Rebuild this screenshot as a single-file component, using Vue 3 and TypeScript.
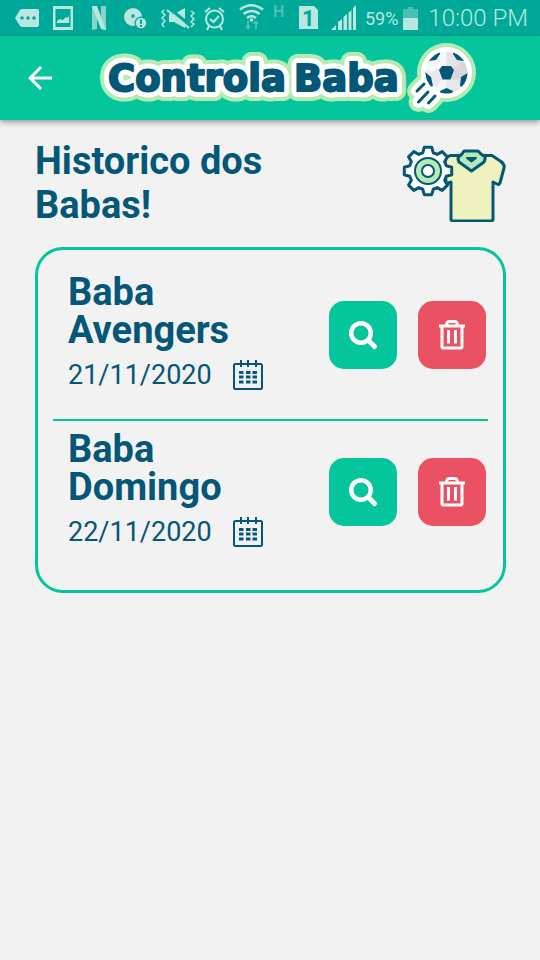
<script setup lang="ts">
import { ref } from 'vue'

interface Match {
  id: number
  name: string
  date: string
}

const matches = ref<Match[]>([
  { id: 1, name: 'Baba Avengers', date: '21/11/2020' },
  { id: 2, name: 'Baba Domingo', date: '22/11/2020' },
])

function removeMatch(id: number): void {
  matches.value = matches.value.filter((match) => match.id !== id)
}

// Outline of an eight-tooth cog wheel around (cx, cy).
function cog(cx: number, cy: number, inner: number, outer: number): string {
  const points: string[] = []
  const corners: [number, number][] = [
    [-16, inner],
    [-9, outer],
    [9, outer],
    [16, inner],
  ]
  for (let tooth = 0; tooth < 8; tooth++) {
    for (const [offset, radius] of corners) {
      const angle = ((tooth * 45 + offset) * Math.PI) / 180
      points.push(`${(cx + radius * Math.sin(angle)).toFixed(2)},${(cy - radius * Math.cos(angle)).toFixed(2)}`)
    }
  }
  return points.join(' ')
}

const cogPoints = cog(26, 27, 19, 24)

// The logo is painted in three passes: outer outline, inner outline, ink.
const logoLayers = ['halo-green', 'halo-white', 'ink']
</script>

<template>
  <div class="screen">
    <div class="status">
      <div class="status-icons" aria-hidden="true">
        <svg width="36" height="36" viewBox="10 0 36 36">
          <path class="on" d="M15 18 20 10Q21 9 22 9H37Q39 9 39 11V25Q39 27 37 27H22Q21 27 20 26Z" />
          <circle class="off" cx="22" cy="18" r="1.8" /><circle class="off" cx="28" cy="18" r="1.8" /><circle class="off" cx="34" cy="18" r="1.8" />
        </svg>
        <svg width="36" height="36" viewBox="46 0 36 36">
          <path class="on" fill-rule="evenodd" d="M53 6H73V30H53ZM55.5 9V27H70.5V9Z" />
          <path class="on" d="M57 23V21L60 19 63 20 66 17 67 18 69 16V23Z" />
        </svg>
        <svg width="34" height="36" viewBox="82 0 34 36">
          <path class="pale" d="M92 6H97V29L92 30ZM101 6H106V30L101 29Z" />
          <path class="on" d="M92 6H97L106 30 101 29Z" />
        </svg>
        <svg width="38" height="36" viewBox="116 0 38 36">
          <circle class="on" cx="133" cy="17" r="9" />
          <circle class="off" cx="133" cy="16" r="1.8" />
          <circle class="off" cx="141" cy="23" r="6.5" />
          <circle class="on" cx="141" cy="23" r="5.2" />
          <path class="off" d="M140 19.5H142V24H140ZM140 25H142V27H140Z" />
        </svg>
        <svg width="46" height="36" viewBox="154 0 46 36">
          <path class="on" d="M169 14H174L185 8V28L174 22H169Z" />
          <path class="cut" d="M169 8 191 26" />
          <path class="line" d="M167 10 189 28" />
          <path class="line thin" d="M164 10 162 12 165 15 162 18 165 21 162 24 164 27M191 11 194 13 191 16 194 19 191 22 194 24 191 27" />
        </svg>
        <svg width="32" height="36" viewBox="200 0 32 36">
          <circle class="line" cx="214.500" cy="19" r="8.500" />
          <path class="line" d="M205 12 210 8M219 8 224 12M209 26 207 30M220 26 222 30M210 19 213.500 22 219 16" />
        </svg>
        <svg width="38" height="36" viewBox="232 0 38 36">
          <path class="line wave" d="M240 9.500Q251.500 1 263 9.500M243.500 14Q251.500 8 259.500 14M247 18Q251.500 14.500 256 18" />
          <circle class="on" cx="251.500" cy="20" r="1.8" />
          <path class="dim" d="M247 21H249V26H251L248 30 245 26H247ZM255 29H257V24H259L256 20 252.500 24H255Z" />
        </svg>
        <svg width="22" height="36" viewBox="270 0 22 36">
          <text class="network" x="273" y="17">H</text>
        </svg>
        <svg width="33" height="36" viewBox="292 0 33 36">
          <path class="on" d="M299 6H314L318 10V29H299Z" />
          <text class="sim" x="302" y="26">1</text>
        </svg>
        <svg width="36" height="36" viewBox="325 0 36 36">
          <path class="on" d="M331 30 336 25V30ZM338 22 342 19V30H338ZM343.500 17 347 14V30H343.500ZM348.500 13 351.500 10V30H348.500ZM353 8 356 5V30H353Z" />
        </svg>
      </div>
      <span class="battery-level">59%</span>
      <svg class="battery" width="15" height="24" viewBox="0 0 15 24" aria-hidden="true">
        <path class="dim" d="M0 3H5V1H10V3H15V12H0Z" />
        <path class="on" d="M0 12H15V24H0Z" />
      </svg>
      <time class="clock">10:00 PM</time>
    </div>

    <header class="app-bar">
      <button class="back" type="button" aria-label="Voltar">
        <svg width="36" height="36" viewBox="0 0 24 24">
          <path fill="#fff" d="M20 11H7.83l5.59-5.59L12 4l-8 8 8 8 1.41-1.41L7.83 13H20v-2z" />
        </svg>
      </button>
      <svg class="logo" width="380" height="74" viewBox="98 41 380 74" role="img" aria-label="Controla Baba">
        <g v-for="layer in logoLayers" :key="layer" :class="layer">
          <text class="brand" x="108" y="91">Controla</text>
          <text class="brand" x="294" y="91">Baba</text>
          <circle v-if="layer !== 'ink'" cx="446.500" cy="72.500" r="19.500" />
          <path class="trail" d="M417 91 424 84M418.500 102 428 92M428.500 103 435 96" />
        </g>
        <clipPath id="ball"><circle cx="446.500" cy="72.500" r="21" /></clipPath>
        <g clip-path="url(#ball)">
          <path fill="#f4f8fa" d="M425 51H447V94H425Z" />
          <path fill="#e4e4e8" d="M446.500 51H468V94H446.500Z" />
          <path fill="#e9e9ed" d="M425 70 432 72 439 68 442 79 437 87 432 82 425 77ZM447 80 451 79 461 87 452 90 446 90Z" />
          <path fill="#d8d7dc" d="M454 68 462 61 468 68 468 74 461 79 451 79Z" />
          <path class="patch" d="M442 66H451L454 70 450.500 79.500H442.500L439 70ZM440 51V54L436 60 429 61V55L436 50ZM453 51V54L457 60 464 61V55L457 50ZM425 72 431 77 433 86 428 88 423 78ZM469 72 461 77 460 86 465 88 470 78ZM440 91 446.500 88 453 91 451 96H441Z" />
        </g>
      </svg>
    </header>

    <main class="content">
      <div class="heading">
        <h1>Historico dos Babas!</h1>
        <svg width="104" height="78" viewBox="0 0 104 78" aria-hidden="true">
          <g class="outline">
            <path fill="#eff2bf" d="M57 11.500H90L99 17.500Q103 21 102 24L98 39Q97 41 95 40L91 38V75Q91 77 89 77H51Q49 77 49 75V38L44 40 43 14Q46 12 49 11.500Z" />
            <path fill="#b5eab5" d="M62 7H76L79 10 82.500 12.500Q84 14 82 18L69.500 27 57 18Q55 14 57 12.500L60 10Z" />
            <path fill="#045777" stroke-width="2" d="M65 14H74L69.500 17.500Z" />
            <polygon fill="#fff" :points="cogPoints" />
          </g>
          <g class="outline slim">
            <circle fill="#b5eab5" cx="26" cy="27" r="13" />
            <circle fill="#fff" cx="26" cy="27" r="6" />
          </g>
        </svg>
      </div>

      <ul class="card">
        <li v-for="match in matches" :key="match.id" class="match">
          <div class="details">
            <h2>{{ match.name }}</h2>
            <div class="date">
              <time>{{ match.date }}</time>
              <svg width="32" height="32" viewBox="0 0 32 32" aria-hidden="true">
                <rect class="sheet" x="2" y="5" width="28" height="25" rx="1.500" />
                <path class="sheet" d="M9 1V8M16 1V8M24 1V8" />
                <path fill="#045777" d="M7 12H11.500V15H7ZM14 12H18.500V15H14ZM20.500 12H25V15H20.500ZM7 16.500H11.500V19.500H7ZM14 16.500H18.500V19.500H14ZM20.500 16.500H25V19.500H20.500ZM7 21.500H11.500V24.500H7ZM14 21.500H18.500V24.500H14ZM20.500 21.500H25V24.500H20.500Z" />
              </svg>
            </div>
          </div>
          <div class="actions">
            <button class="action view" type="button" :aria-label="`Ver ${match.name}`">
              <svg width="36" height="36" viewBox="0 0 36 36">
                <circle cx="16" cy="16" r="9.800" stroke-width="4.500" />
                <path stroke-width="5" stroke-linecap="round" d="M23.500 23.500 29.500 29.500" />
              </svg>
            </button>
            <button class="action remove" type="button" :aria-label="`Excluir ${match.name}`" @click="removeMatch(match.id)">
              <svg width="36" height="36" viewBox="0 0 36 36">
                <path stroke-width="3" d="M5 9H31M8 9V29.500Q8 31 9.500 31H26.500Q28 31 28 29.500V9M12 9 13 6Q13.500 4.500 15 4.500H21Q22.500 4.500 23 6L24 9" />
                <path stroke-width="3" d="M14.500 13V26.500M21.500 13V26.500" />
              </svg>
            </button>
          </div>
        </li>
      </ul>
    </main>
  </div>
</template>

<style>
body {
  margin: 0;
  background: #f2f2f2;
}
</style>

<style scoped>
.screen {
  min-height: 100vh;
  background: #f2f2f2;
  color: #045777;
  font-family: Roboto, "Liberation Sans", sans-serif;
}
.status {
  display: flex;
  align-items: center;
  height: 36px;
  padding: 0 12px 0 10px;
  background: #00a997;
  color: #b8e7e2;
}
.status-icons {
  display: flex;
  flex: none;
}
.on { fill: #b8e7e2; }
.off { fill: #00a997; }
.dim { fill: #4abfb3; }
.pale { fill: #85d5cb; }
.line {
  fill: none;
  stroke: #b8e7e2;
  stroke-width: 2;
}
.thin { stroke-width: 1.5; }
.wave { stroke-width: 2.5; }
.cut {
  stroke: #00a997;
  stroke-width: 3;
}
.network {
  font-size: 16px;
  font-weight: 700;
  fill: #4abfb3;
}
.sim {
  font-size: 22px;
  font-weight: 700;
  fill: #00a997;
}
.battery-level {
  margin-left: 4px;
  font-size: 18px;
}
.battery { margin-left: 5px; }
.clock {
  margin-left: auto;
  font-size: 24px;
  font-weight: 300;
  white-space: nowrap;
}
.app-bar {
  position: relative;
  display: flex;
  align-items: center;
  gap: 40px;
  height: 84px;
  padding: 0 22px;
  background: #05c59c;
  box-shadow: 0 2px 6px rgba(0, 0, 0, 0.4);
}
.back {
  flex: none;
  width: 36px;
  height: 36px;
  padding: 0;
  border: 0;
  background: none;
}
.back svg, .logo, .heading svg, .date svg, .action svg {
  display: block;
}
.logo, .heading svg {
  flex: none;
}
.brand {
  font-family: "DejaVu Sans", sans-serif;
  font-size: 37px;
  font-weight: 700;
}
.halo-green, .halo-white, .ink {
  stroke-linejoin: round;
  stroke-linecap: round;
}
.ink {
  fill: #045777;
  stroke: #045777;
  stroke-width: 2;
}
.ink .trail { stroke-width: 3; }
.halo-green {
  fill: #b5eab5;
  stroke: #b5eab5;
  stroke-width: 20;
}
.halo-white {
  fill: #fff;
  stroke: #fff;
  stroke-width: 12;
}
.patch { fill: #045777; }
.content {
  padding: 19px 34px;
}
.heading {
  display: flex;
  align-items: center;
  justify-content: space-between;
  padding-left: 1px;
}
h1 {
  max-width: 60%;
  margin: 0;
  font-size: 38px;
  line-height: 44px;
  font-weight: 700;
}
.outline {
  stroke: #045777;
  stroke-width: 3;
  stroke-linejoin: round;
}
.slim { stroke-width: 2; }
.card {
  margin: 20px 0 0 1px;
  padding: 14px 15px;
  border: 3px solid #05c59c;
  border-radius: 28px;
  list-style: none;
}
.match {
  display: flex;
  align-items: center;
  justify-content: space-between;
  padding: 9px 2px 23px 15px;
}
.match:not(:last-child) {
  border-bottom: 2px solid #05c59c;
}
.details {
  width: 50%;
  padding-bottom: 5px;
}
h2 {
  margin: 0;
  font-size: 38px;
  line-height: 38px;
  font-weight: 700;
}
.date {
  display: flex;
  align-items: center;
  gap: 20px;
  margin-top: 10px;
  font-size: 27px;
  line-height: 32px;
}
.sheet {
  fill: none;
  stroke: #045777;
  stroke-width: 2;
}
.actions {
  display: flex;
  gap: 21px;
}
.action {
  display: grid;
  place-items: center;
  width: 68px;
  height: 68px;
  padding: 0;
  border: 0;
  border-radius: 15px;
}
.action svg {
  fill: none;
  stroke: #fff;
}
.view { background: #05c59c; }
.remove { background: #ea5162; }
</style>
